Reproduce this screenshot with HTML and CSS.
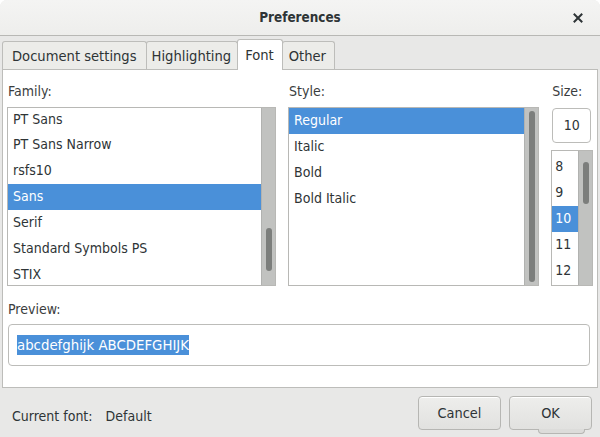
FILE: index.html
```html
<!DOCTYPE html>
<html>
<head>
<meta charset="utf-8">
<link rel="stylesheet" href="styles.css">
</head>
<body>
<div class="window">
  <div class="titlebar">
    <span class="title">Preferences</span>
    <span class="close"><svg width="10" height="10" viewBox="0 0 10 10"><path d="M1.5 1.5 L8.5 8.5 M8.5 1.5 L1.5 8.5" stroke="#2e3436" stroke-width="2" stroke-linecap="square"/></svg></span>
  </div>
  <div class="notebook">
    <div class="tabs">
      <div class="tab tab-doc">Document settings</div>
      <div class="tab">Highlighting</div>
      <div class="tab active">Font</div>
      <div class="tab tab-other">Other</div>
    </div>
    <div class="page">
      <div class="chooser">
        <div class="col family">
          <div class="label">Family:</div>
          <div class="list">
            <div class="items">
              <div class="item">PT Sans</div>
              <div class="item">PT Sans Narrow</div>
              <div class="item">rsfs10</div>
              <div class="item sel">Sans</div>
              <div class="item">Serif</div>
              <div class="item">Standard Symbols PS</div>
              <div class="item">STIX</div>
            </div>
            <div class="trough"><div class="thumb thumb-family"></div></div>
          </div>
        </div>
        <div class="col style">
          <div class="label">Style:</div>
          <div class="list">
            <div class="items">
              <div class="item sel">Regular</div>
              <div class="item">Italic</div>
              <div class="item">Bold</div>
              <div class="item">Bold Italic</div>
            </div>
            <div class="trough"><div class="thumb thumb-style"></div></div>
          </div>
        </div>
        <div class="col size">
          <div class="label">Size:</div>
          <div class="entry size-entry">10</div>
          <div class="list size-list">
            <div class="items">
              <div class="item">8</div>
              <div class="item">9</div>
              <div class="item sel">10</div>
              <div class="item">11</div>
              <div class="item">12</div>
            </div>
            <div class="trough"><div class="thumb thumb-size"></div></div>
          </div>
        </div>
      </div>
      <div class="label preview-label">Preview:</div>
      <div class="entry preview"><span class="selected-text">abcdefghijk ABCDEFGHIJK</span></div>
    </div>
  </div>
  <div class="footer">
    <div class="current"><span>Current font:</span><span class="cur-val">Default</span></div>
    <div class="buttons">
      <div class="btn">Cancel</div>
      <div class="btn ok">OK</div>
    </div>
  </div>
</div>
</body>
</html>
```
FILE: styles.css
```css
html, body {
  margin: 0;
  padding: 0;
  background: #ffffff;
}
body {
  font-family: "DejaVu Sans Condensed", "DejaVu Sans", sans-serif;
  font-stretch: condensed;
  font-size: 14px;
  color: #2e3436;
}
.window {
  width: 600px;
  height: 437px;
  background: #e8e8e7;
  display: flex;
  flex-direction: column;
  overflow: hidden;
  border-radius: 7px 7px 0 0;
}
.titlebar {
  height: 36px;
  flex: 0 0 36px;
  box-sizing: border-box;
  background: linear-gradient(#f4f4f3, #eeeeec);
  border-bottom: 1px solid #b8b8b5;
  position: relative;
  display: flex;
  align-items: center;
  justify-content: center;
}
.title {
  font-weight: bold;
  font-size: 13.4px;
  color: #2e3436;
}
.close {
  position: absolute;
  right: 17px;
  top: 13px;
  width: 10px;
  height: 10px;
  display: flex;
}
.notebook {
  margin: 3px 2px 0 2px;
  display: flex;
  flex-direction: column;
}
.tabs {
  display: flex;
  height: 30px;
  align-items: flex-end;
}
.tab {
  height: 28px;
  box-sizing: border-box;
  border: 1px solid #bdbdba;
  border-bottom: none;
  border-radius: 3px 3px 0 0;
  background: #ecece9;
  padding: 0 6px 0 5px;
  display: flex;
  align-items: center;
  margin-right: -1px;
  font-size: 14.6px;
  color: #2e3436;
}
.tab-doc {
  padding: 0 9px 0 9px;
}
.tab-other {
  padding: 0 8px 0 6px;
}
.tab.active {
  height: 31px;
  background: #ffffff;
  position: relative;
  z-index: 1;
  margin-bottom: -1px;
  padding: 0 8px 2px 7px;
}
.page {
  background: #ffffff;
  border: 1px solid #bdbdba;
  height: 319px;
  box-sizing: border-box;
  padding: 0 4px 0 4px;
  display: flex;
  flex-direction: column;
}
.chooser {
  display: flex;
  gap: 12px;
}
.col {
  display: flex;
  flex-direction: column;
}
.family { width: 270px; }
.style { width: 252px; }
.size { width: 42px; }
.label {
  height: 37px;
  line-height: 43px;
  color: #3a3d3e;
  font-size: 14px;
  padding-left: 1px;
}
.list {
  border: 1px solid #b8b8b5;
  height: 179px;
  box-sizing: border-box;
  display: flex;
  background: #fff;
}
.items {
  flex: 1;
  display: flex;
  flex-direction: column;
  overflow: hidden;
}
.item {
  height: 26px;
  flex: 0 0 26px;
  line-height: 24px;
  padding-left: 5px;
  white-space: nowrap;
}
.family .item:first-child {
  height: 24px;
  flex-basis: 24px;
  line-height: 22px;
}
.item.sel {
  background: #4a90d9;
  color: #ffffff;
}
.trough {
  width: 13px;
  background: #c1c2c0;
  border-left: 1px solid #b1b2b0;
  position: relative;
}
.thumb {
  position: absolute;
  left: 4px;
  width: 6px;
  background: #7c7e7c;
  border-radius: 3px;
}
.thumb-family { top: 120px; height: 43px; }
.thumb-style { top: 3px; bottom: 3px; }
.thumb-size { top: 11px; height: 42px; }
.entry {
  border: 1px solid #bcbcb9;
  border-radius: 4px;
  box-sizing: border-box;
  background: #fff;
}
.size-entry {
  height: 35px;
  width: 39px;
  margin-left: 1px;
  margin-top: 1px;
  text-align: center;
  line-height: 33px;
}
.size-list {
  margin-top: 7px;
  height: 136px;
}
.size-list .items {
  padding-top: 3px;
}
.size-list .item {
  padding-left: 3px;
}
.preview-label {
  height: 38px;
  line-height: 46px;
}
.preview {
  height: 42px;
  margin: 0 3px 0 1px;
  display: flex;
  align-items: center;
  padding-left: 8px;
}
.selected-text {
  background: #4a90d9;
  color: #ffffff;
  font-size: 14.8px;
  line-height: 20px;
}
.footer {
  flex: 1;
  display: flex;
  align-items: center;
  justify-content: space-between;
  padding: 0 8px 0 12px;
}
.current {
  display: flex;
  gap: 13px;
  color: #2e3436;
  margin-top: 6px;
}
.buttons {
  display: flex;
  gap: 8px;
}
.btn {
  width: 83px;
  height: 34px;
  box-sizing: border-box;
  border: 1px solid #b6b6b3;
  border-radius: 4px;
  background: linear-gradient(#eeeeec, #e1e1df);
  display: flex;
  align-items: center;
  justify-content: center;
  position: relative;
  box-shadow: inset 0 1px #ffffff;
  font-size: 14.4px;
}
.btn.ok::after {
  content: "";
  position: absolute;
  left: 28px;
  right: 6px;
  bottom: -5px;
  height: 4px;
  border: 1px solid #b6b6b3;
  border-top: none;
  border-radius: 0 0 4px 4px;
  background: #dcdcda;
}
```
